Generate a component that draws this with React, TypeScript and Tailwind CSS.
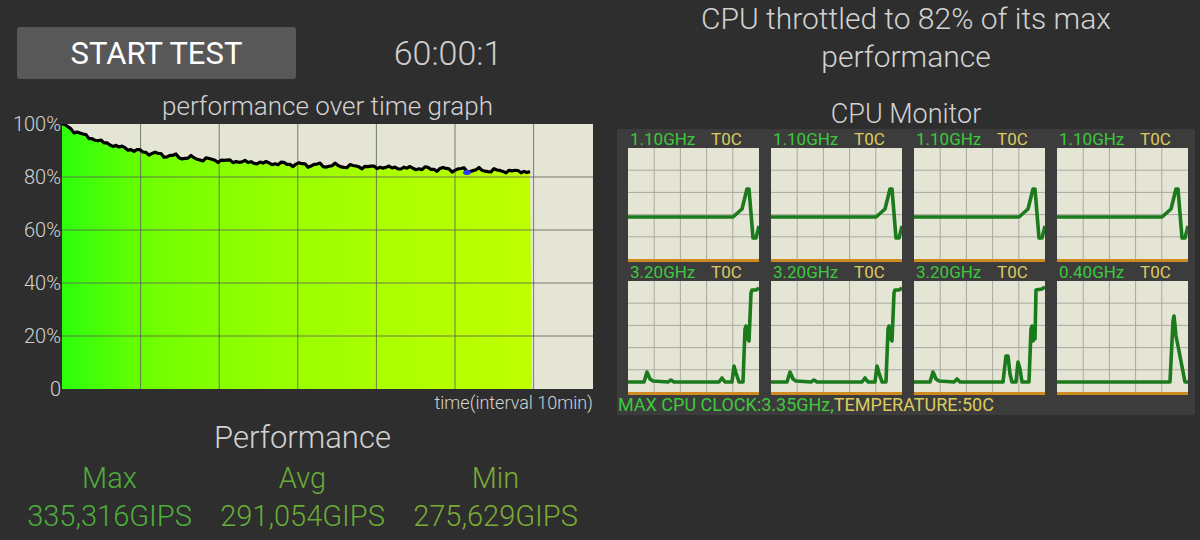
import React from 'react';

const PLOT_W = 531;
const PLOT_H = 265;
const FILL_END = 470;

// deterministic wobble so the curve looks like sampled data
function perfAt(x: number) {
  const base = 82 + 5 * (1 - x / FILL_END) + 13 * Math.exp(-x / 60);
  const noise =
    0.5 * Math.sin(x * 0.35) + 0.35 * Math.sin(x * 0.83 + 1) + 0.22 * Math.sin(x * 1.7 + 2);
  return Math.min(100, base + noise);
}

function perfPoints() {
  const pts: [number, number][] = [];
  for (let x = 0; x <= FILL_END; x += 3) {
    pts.push([x, (100 - perfAt(x)) * (PLOT_H / 100)]);
  }
  return pts;
}

function PerfGraph() {
  const pts = perfPoints();
  const line = pts.map(([x, y], i) => `${i ? 'L' : 'M'}${x},${y.toFixed(1)}`).join(' ');
  const area = `M0,${PLOT_H} ${pts.map(([x, y]) => `L${x},${y.toFixed(1)}`).join(' ')} L${FILL_END},${PLOT_H} Z`;
  const dotY = (100 - perfAt(405)) * (PLOT_H / 100);
  return (
    <svg width={PLOT_W} height={PLOT_H} viewBox={`0 0 ${PLOT_W} ${PLOT_H}`} className="block">
      <defs>
        <linearGradient id="perfFill" x1="0" y1="0" x2={FILL_END} y2="0" gradientUnits="userSpaceOnUse">
          <stop offset="0" stopColor="#2cff0c" />
          <stop offset="0.2" stopColor="#72ff00" />
          <stop offset="0.45" stopColor="#96ff00" />
          <stop offset="0.7" stopColor="#acff00" />
          <stop offset="1" stopColor="#bfff00" />
        </linearGradient>
      </defs>
      <rect width={PLOT_W} height={PLOT_H} fill="#e5e5d6" />
      <path d={area} fill="url(#perfFill)" />
      {[1, 2, 3, 4, 5, 6].map((i) => (
        <line key={'v' + i} x1={i * 78.6} x2={i * 78.6} y1={0} y2={PLOT_H} stroke="#5c5c5c" strokeWidth={0.8} />
      ))}
      {[1, 2, 3, 4].map((i) => (
        <line key={'h' + i} x1={0} x2={PLOT_W} y1={i * 53} y2={i * 53} stroke="#5c5c5c" strokeWidth={0.8} />
      ))}
      <path d={line} fill="none" stroke="#000" strokeWidth={3.2} strokeLinejoin="round" />
      <ellipse cx={405} cy={dotY + 1} rx={4} ry={2.5} fill="#2b3cff" />
    </svg>
  );
}

type Pt = [number, number];

const TOP_LINE: Pt[] = [
  [0, 69], [105, 69], [114, 61], [119, 41], [121, 41], [125, 90], [128, 90], [131, 78],
];

const BIG_LINE: Pt[] = [
  [0, 101], [16, 101], [19, 91], [22, 98], [25, 100], [40, 101], [43, 99], [46, 101], [91, 101],
  [94, 97], [97, 101], [104, 101], [106, 85], [108, 92], [111, 101], [115, 101], [117, 48],
  [118, 45], [119, 58], [120, 50], [121, 60], [123, 12], [124, 9], [128, 9], [131, 7],
];

const THIRD_LINE: Pt[] = [
  [0, 101], [16, 101], [19, 91], [22, 98], [25, 100], [40, 101], [43, 98], [46, 101], [89, 101],
  [92, 75], [94, 75], [96, 93], [98, 101], [102, 101], [104, 81], [106, 88], [108, 101], [115, 101],
  [117, 48], [118, 45], [119, 60], [120, 52], [121, 58], [122, 9], [128, 8], [131, 6],
];

const LOW_LINE: Pt[] = [
  [0, 101], [113, 101], [116, 40], [117, 35], [119, 55], [122, 70], [128, 101], [131, 101],
];

function CoreChart({ pts }: { pts: Pt[] }) {
  const d = pts.map(([x, y], i) => `${i ? 'L' : 'M'}${x},${y}`).join(' ');
  return (
    <div className="flex flex-col">
      <svg width={131} height={111} viewBox="0 0 131 111" className="block">
        <rect width={131} height={111} fill="#e5e5d6" />
        {[1, 2, 3, 4].map((i) => (
          <line key={'v' + i} x1={i * 26.2} x2={i * 26.2} y1={0} y2={111} stroke="#a8a8a0" strokeWidth={1} />
        ))}
        {[1, 2, 3, 4].map((i) => (
          <line key={'h' + i} x1={0} x2={131} y1={i * 22.2} y2={i * 22.2} stroke="#a8a8a0" strokeWidth={1} />
        ))}
        <path d={d} fill="none" stroke="#1b7a1b" strokeWidth={3.6} strokeLinejoin="round" />
      </svg>
      <div className="h-[3px] w-[131px] bg-[#cf8a22]" />
    </div>
  );
}

const CORES: { ghz: string; pts: Pt[] }[] = [
  { ghz: '1.10GHz', pts: TOP_LINE },
  { ghz: '1.10GHz', pts: TOP_LINE },
  { ghz: '1.10GHz', pts: TOP_LINE },
  { ghz: '1.10GHz', pts: TOP_LINE },
  { ghz: '3.20GHz', pts: BIG_LINE },
  { ghz: '3.20GHz', pts: BIG_LINE },
  { ghz: '3.20GHz', pts: THIRD_LINE },
  { ghz: '0.40GHz', pts: LOW_LINE },
];

const STATS = [
  { label: 'Max', value: '335,316GIPS', color: 'text-[#4dae3c]' },
  { label: 'Avg', value: '291,054GIPS', color: 'text-[#68ac36]' },
  { label: 'Min', value: '275,629GIPS', color: 'text-[#7bab34]' },
];

const Y_LABELS = ['100%', '80%', '60%', '40%', '20%', '0'];

export default function App() {
  return (
    <div className="w-[1200px] h-[540px] bg-[#2e2e2e] flex overflow-hidden font-['Roboto',sans-serif] font-light text-[#d2d2d2]">
      {/* left: test control + performance graph */}
      <div className="w-[600px] flex flex-col">
        <div className="flex items-center pt-[27px]">
          <button className="ml-[17px] w-[279px] h-[52px] rounded-[3px] bg-[#585858] text-white text-[31px] font-normal leading-none">
            START TEST
          </button>
          <div className="flex-1 text-center text-[34px] leading-none text-[#cfcfcf]">60:00:1</div>
        </div>

        <div className="mt-[13px] mb-[4px] pl-[62px] pr-[7px] text-center text-[26px] leading-[28px]">
          performance over time graph
        </div>

        <div className="flex">
          <div className="w-[62px] h-[265px] flex flex-col justify-between pr-[1px]">
            {Y_LABELS.map((l) => (
              <div key={l} className="h-0 flex items-center justify-end text-[20px]">
                {l}
              </div>
            ))}
          </div>
          <PerfGraph />
        </div>

        <div className="mt-[4px] pr-[7px] text-right text-[18px] leading-[20px]">time(interval 10min)</div>

        <div className="mt-[8px] w-[579px] ml-[13px] text-center text-[31px] leading-[34px]">Performance</div>

        <div className="ml-[13px] w-[579px] grid grid-cols-3 mt-[7px] text-center text-[29px] leading-[32px]">
          {STATS.map((s) => (
            <div key={s.label} className={s.color}>
              {s.label}
            </div>
          ))}
          {STATS.map((s) => (
            <div key={s.value} className={`${s.color} mt-[6px]`}>
              {s.value}
            </div>
          ))}
        </div>
      </div>

      {/* right: throttle summary + per-core monitor */}
      <div className="w-[600px] flex flex-col pl-[17px] pr-[5px]">
        <div className="text-center text-[30px] leading-[38px]">
          CPU throttled to 82% of its max
          <br />
          performance
        </div>
        <div className="mt-[23px] text-center text-[27px] leading-[30px]">CPU Monitor</div>

        <div className="h-[286px] bg-[#3c3c3c] pl-[1px] pt-[2px] font-normal">
          <div className="ml-[10px] grid grid-cols-4 gap-x-[12px] gap-y-[2px] w-[560px]">
            {CORES.map((c, i) => (
              <div key={i} className="flex flex-col">
                <div className="flex h-[17px] items-center pl-[2px] text-[17px] leading-none">
                  <span className="w-[81px] text-[#3cc93c]">{c.ghz}</span>
                  <span className="text-[#dccb5c]">T0C</span>
                </div>
                <CoreChart pts={c.pts} />
              </div>
            ))}
          </div>
          <div className="mt-[1px] h-[17px] flex items-center text-[18px] leading-none">
            <span className="text-[#3cc93c]">MAX CPU CLOCK:3.35GHz,</span>
            <span className="text-[#dccb5c]">TEMPERATURE:50C</span>
          </div>
        </div>
      </div>
    </div>
  );
}
